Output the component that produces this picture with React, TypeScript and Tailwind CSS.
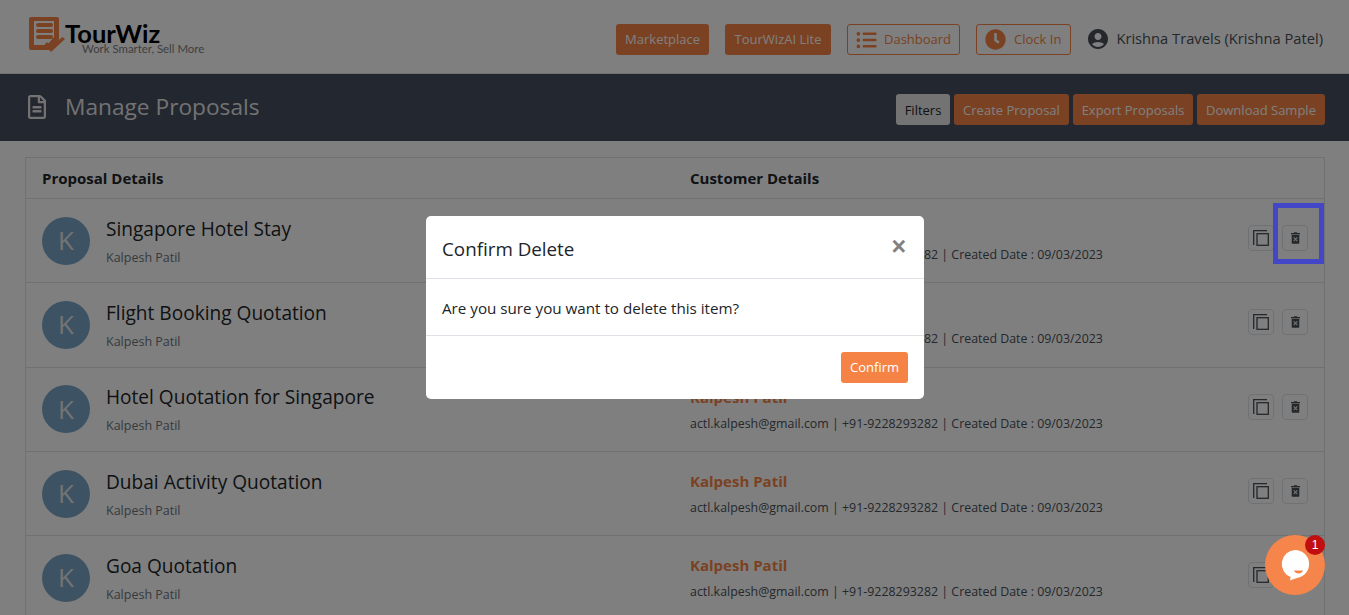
import { FaRegFileAlt, FaClock, FaListUl } from 'react-icons/fa'
import { MdAccountCircle } from 'react-icons/md'

const proposals = ['Singapore Hotel Stay', 'Flight Booking Quotation', 'Hotel Quotation for Singapore', 'Dubai Activity Quotation', 'Goa Quotation']

function Logo() {
  return (
    <div className="relative h-[40px] w-[180px]">
      <svg viewBox="0 0 37 36" className="absolute left-0 top-0 h-[36px] w-[37px]">
        <path d="M2 0H28a2 2 0 0 1 2 2V22L22 33H2a2 2 0 0 1-2-2V2a2 2 0 0 1 2-2Z" fill="#f58345" />
        <path d="M5 4H25V20L18 28H5Z" fill="#fff" />
        <rect x="7" y="6" width="17" height="4" rx="2" fill="#f58345" />
        <rect x="7" y="12" width="17" height="4" rx="2" fill="#f58345" />
        <rect x="7" y="18" width="17" height="4" rx="2" fill="#f58345" />
        <path d="M15.500 27.500l2.500-2.500 4 4 11.500-9 2.500 2-14 13Z" fill="#f58345" />
      </svg>
      <span className="absolute left-[36px] top-[-2px] font-['Lato',sans-serif] text-[25.5px] font-bold leading-[36px] text-black">
        TourWiz
      </span>
      <span className="absolute left-[53px] top-[25px] whitespace-nowrap font-['Lato',sans-serif] text-[11.4px] leading-[14px] text-[#808080]">
        Work Smarter, Sell More
      </span>
    </div>
  )
}

function Header() {
  return (
    <header className="flex h-[74px] items-center justify-between border-b border-[#dee2e6] bg-white pl-[29px] pr-[26px]">
      <Logo />
      <div className="flex items-center pt-[6px]">
        <button className="h-[31px] rounded-[3px] bg-[#f58345] px-[9px] pt-[1px] text-[13px] text-white">Marketplace</button>
        <button className="ml-[16px] h-[31px] rounded-[3px] bg-[#f58345] px-[9.5px] pt-[1px] text-[13px] text-white">TourWizAI Lite</button>
        <button className="ml-[16px] flex h-[31px] items-center gap-[7px] rounded-[3px] border border-[#f58345] px-[8px] text-[13px] text-[#f58345]">
          <FaListUl className="h-[20px] w-[21px]" />
          <span className="pt-[1px]">Dashboard</span>
        </button>
        <button className="ml-[16px] flex h-[31px] items-center gap-[8px] rounded-[3px] border border-[#f58345] pl-[8px] pr-[9px] text-[13px] text-[#f58345]">
          <FaClock className="h-[21px] w-[21px]" />
          <span className="pt-[1px]">Clock In</span>
        </button>
        <div className="ml-[15px] flex items-center gap-[6px] pb-[2px] text-[14.7px] text-[#495057]">
          <MdAccountCircle className="h-[24px] w-[24px] text-[#495057]" />
          Krishna Travels (Krishna Patel)
        </div>
      </div>
    </header>
  )
}

function TitleBar() {
  return (
    <div className="flex h-[67px] items-center justify-between bg-[#444e60] pl-[27px] pr-[24px]">
      <div className="flex items-center gap-[18px]">
        <FaRegFileAlt className="h-[24px] w-[20px] text-[#e4e4e4]" />
        <h1 className="text-[22.7px] font-normal text-[#e4e4e4]">Manage Proposals</h1>
      </div>
      <div className="flex items-center gap-[4px] pt-[4px] text-[13px]">
        <button className="h-[31px] w-[54px] rounded-[3px] bg-[#e6e6e6] pt-[2px] text-[#212529]">Filters</button>
        <button className="h-[31px] w-[115px] rounded-[3px] bg-[#f58345] pt-[2px] text-white">Create Proposal</button>
        <button className="h-[31px] w-[120px] rounded-[3px] bg-[#f58345] pt-[2px] text-white">Export Proposals</button>
        <button className="h-[31px] w-[128px] rounded-[3px] bg-[#f58345] pt-[2px] text-white">Download Sample</button>
      </div>
    </div>
  )
}

function CopyIcon() {
  return (
    <svg viewBox="0 0 16 16" className="h-[16px] w-[16px]" fill="none" stroke="currentColor" strokeWidth="1.3">
      <path d="M14 .7H.7V15" />
      <rect x="4" y="3.700" width="11.300" height="11.600" />
    </svg>
  )
}

function TrashIcon() {
  return (
    <svg viewBox="0 0 10 13" className="h-[12px] w-[9px]">
      <path d="M3.500 0h3l.5 1h3v1.200H0V1h3Z" fill="currentColor" />
      <path d="M.8 3h8.400v9a1 1 0 0 1-1 1H1.800a1 1 0 0 1-1-1Z" fill="currentColor" />
      <path d="M3 5.800l4 4.200M7 5.800L3 10" stroke="#fff" strokeOpacity="0.85" strokeWidth="1.300" />
    </svg>
  )
}

function ProposalRow({ title }: { title: string }) {
  return (
    <div className="flex h-[84.3px] items-center border-b border-[#dee2e6] px-[16px]">
      <div className="flex h-[48px] w-[48px] shrink-0 items-center justify-center rounded-full bg-[#7ba5c6] text-[26px] text-[#e6e6e6]">
        K
      </div>
      <div className="ml-[16px] w-[584px] shrink-0 pb-[1px]">
        <div className="text-[19.1px] leading-[30px] text-[#212529]">{title}</div>
        <div className="mt-[5px] text-[12.5px] leading-[18px] text-[#6c757d]">Kalpesh Patil</div>
      </div>
      <div className="w-[558px] shrink-0 pt-[1px]">
        <div className="text-[15px] font-bold leading-[21px] text-[#f58345]">Kalpesh Patil</div>
        <div className="mt-[7px] text-[12.4px] leading-[18px] text-[#495057]">
          actl.kalpesh@gmail.com | +91-9228293282 | Created Date : 09/03/2023
        </div>
      </div>
      <div className="flex gap-[8px] pb-[5px]">
        <button className="flex h-[26px] w-[26px] items-center justify-center rounded-[4px] border border-[#dee2e6] text-[#495057]">
          <CopyIcon />
        </button>
        <button className="flex h-[26px] w-[26px] items-center justify-center rounded-[4px] border border-[#dee2e6] text-[#495057]">
          <TrashIcon />
        </button>
      </div>
    </div>
  )
}

function ProposalTable() {
  return (
    <div className="ml-[25px] mr-[24px] mt-[16px] border border-[#dee2e6]">
      <div className="flex h-[41px] items-center border-b border-[#dee2e6] pl-[16px] pt-[1px] text-[15px] font-bold text-[#212529]">
        <div className="w-[648px]">Proposal Details</div>
        <div>Customer Details</div>
      </div>
      {proposals.map((title) => (
        <ProposalRow key={title} title={title} />
      ))}
    </div>
  )
}

function ConfirmModal() {
  return (
    <div className="absolute left-[426px] top-[216px] z-20 w-[498px] rounded-[5px] bg-white text-[#212529]">
      <div className="flex h-[63px] items-center justify-between border-b border-[#dee2e6] pl-[16px] pr-[18px]">
        <h2 className="pt-[5px] text-[18.8px] font-normal">Confirm Delete</h2>
        <span className="pb-[2px] font-['Liberation_Sans',sans-serif] text-[25px] font-bold leading-none text-[#808080]">×</span>
      </div>
      <div className="flex h-[57px] items-center border-b border-[#dee2e6] pl-[16px] pt-[3px] text-[15.2px]">
        Are you sure you want to delete this item?
      </div>
      <div className="flex h-[63px] items-center justify-end pr-[16px]">
        <button className="h-[31px] w-[67px] rounded-[3px] bg-[#f58345] pt-[1px] text-[13px] text-white">Confirm</button>
      </div>
    </div>
  )
}

function ChatBubble() {
  return (
    <div className="absolute left-[1265px] top-[535px] z-20 h-[60px] w-[60px] rounded-full bg-[#f5854a]">
      {/* speech bubble, drawn in the launcher's own 60px box */}
      <svg viewBox="0 0 60 60" className="h-[60px] w-[60px]">
        <path d="M30 15a14 14 0 0 1 3 27.700C30 43.500 27.500 44.500 25 45.500l.6-3.500A14 14 0 0 1 30 15Z" fill="#fff" />
        <path d="M29 35.500h9c-.6 2-2.400 3-4.500 3s-3.900-1-4.500-3Z" fill="#f5854a" />
      </svg>
      <span className="absolute left-[40px] top-0 flex h-[20px] w-[20px] items-center justify-center rounded-full bg-[#c10f0f] font-['Liberation_Sans',sans-serif] text-[12px] text-white">
        1
      </span>
    </div>
  )
}

export default function App() {
  return (
    <div className="relative h-[615px] overflow-hidden bg-white font-['Open_Sans',sans-serif]">
      <Header />
      <TitleBar />
      <ProposalTable />
      {/* backdrop */}
      <div className="absolute inset-0 z-10 bg-black/50" />
      {/* highlight around the delete button */}
      <div className="absolute left-[1273px] top-[203px] z-20 h-[61px] w-[51px] border-[5px] border-[#4446c8]" />
      <ConfirmModal />
      <ChatBubble />
    </div>
  )
}
